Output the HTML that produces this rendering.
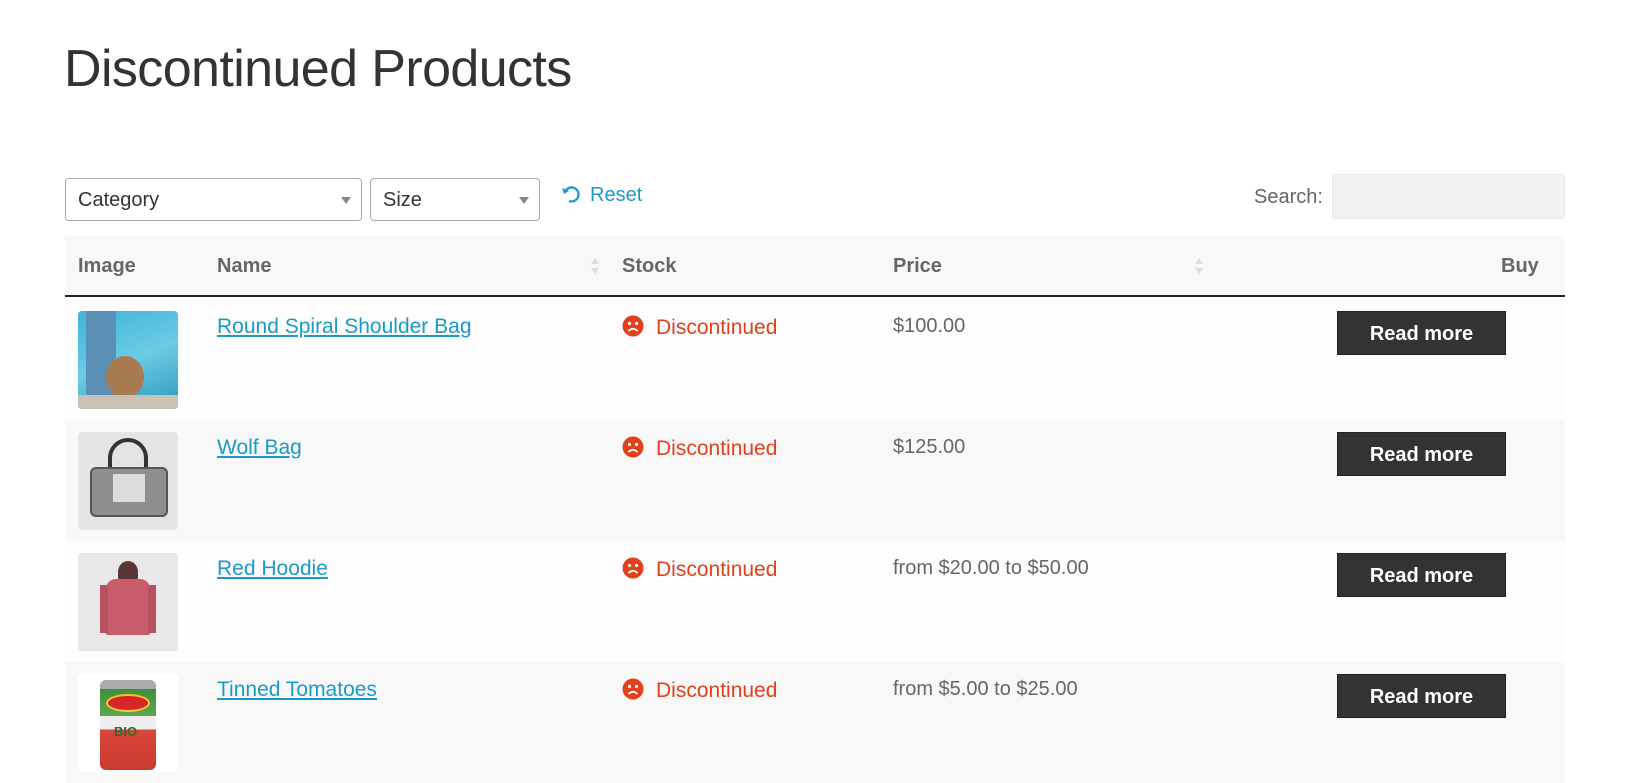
<!DOCTYPE html>
<html><head><meta charset="utf-8"><style>
*{margin:0;padding:0;box-sizing:border-box}
body{width:1640px;height:782px;overflow:hidden;background:#fff;font-family:"Liberation Sans",sans-serif;position:relative;color:#666}
.a{position:absolute}
h1{position:absolute;left:64px;top:39px;font-size:52px;font-weight:300;color:#333;letter-spacing:-0.6px;white-space:nowrap}
.sel{position:absolute;top:178px;height:43px;border:1px solid #aaa;border-radius:4px;background:#fff;font-size:20px;color:#333;padding:10px 12px;line-height:22px}
.sel:after{content:"";position:absolute;right:10px;top:18px;border-left:5px solid transparent;border-right:5px solid transparent;border-top:7px solid #888}
.row{position:absolute;left:65px;width:1500px;height:121px}
.img{position:absolute;left:13px;top:12px;width:100px;height:98px;border-radius:4px;overflow:hidden}
.name{position:absolute;left:152px;top:16px;font-size:21px;color:#1a9ac8;text-decoration:underline}
.stock{position:absolute;left:557px;top:16px;font-size:21px;color:#e2401c}
.stock svg{vertical-align:-3px;margin-right:12px}
.price{position:absolute;left:828px;top:16px;font-size:20px;color:#666}
.btn{position:absolute;left:1272px;top:12px;width:169px;height:44px;background:#333;color:#fff;font-weight:bold;font-size:20px;text-align:center;line-height:44px;border:1px solid #222}
.th{position:absolute;top:255px;font-size:20px;font-weight:bold;color:#666}
.sort{position:absolute;top:256px;width:10px;height:20px}
</style></head><body>
<h1>Discontinued Products</h1>
<div class="sel" style="left:65px;width:297px">Category</div>
<div class="sel" style="left:370px;width:170px">Size</div>
<svg class="a" style="left:560px;top:184px" width="22" height="22" viewBox="0 0 22 22"><path d="M5 8 A7 7 0 1 1 9 17" fill="none" stroke="#1a9ac8" stroke-width="2.3"/><path d="M2 4 L4 10 L9 7 Z" fill="#1a9ac8"/></svg>
<div class="a" style="left:590px;top:184px;font-size:20px;color:#1a9ac8">Reset</div>
<div class="a" style="left:1254px;top:186px;font-size:20px;color:#666">Search:</div>
<div class="a" style="left:1332px;top:174px;width:233px;height:45px;background:#f2f2f2;border:1px solid #e6e6e6;border-radius:3px"></div>
<div class="a" style="left:65px;top:236px;width:1500px;height:61px;background:#f8f8f8;border-bottom:2px solid #222"></div>
<div class="th" style="left:78px">Image</div>
<div class="th" style="left:217px">Name</div>
<div class="th" style="left:622px">Stock</div>
<div class="th" style="left:893px">Price</div>
<div class="th" style="left:1501px">Buy</div>
<svg class="sort" style="left:590px" viewBox="0 0 10 20"><path d="M1 8 L5 2 L9 8Z M1 12 L5 18 L9 12Z" fill="#ddd"/></svg>
<svg class="sort" style="left:1194px" viewBox="0 0 10 20"><path d="M1 8 L5 2 L9 8Z M1 12 L5 18 L9 12Z" fill="#ddd"/></svg>

<svg width="0" height="0" style="position:absolute"><defs><g id="f"><circle cx="11" cy="11" r="10.5" fill="#e2401c"/><circle cx="7.5" cy="8.5" r="1.6" fill="#fff"/><circle cx="14.5" cy="8.5" r="1.6" fill="#fff"/><path d="M6.5 16 Q11 11.5 15.5 16" fill="none" stroke="#fff" stroke-width="1.8"/></g></defs></svg>

<div class="row" style="top:299px;background:#fdfdfd">
 <div class="img" style="background:linear-gradient(160deg,#3fb4d8,#6ccbe6 50%,#2c98b8)"><div class="a" style="left:8px;top:0;width:30px;height:98px;background:#5c8fb5"></div><div class="a" style="left:28px;top:45px;width:38px;height:42px;border-radius:50%;background:#a77b4f"></div><div class="a" style="left:0;top:84px;width:100px;height:14px;background:#c9c2b6"></div></div>
 <a class="name">Round Spiral Shoulder Bag</a>
 <div class="stock"><svg width="22" height="22"><use href="#f"/></svg>Discontinued</div>
 <div class="price">$100.00</div>
 <div class="btn">Read more</div>
</div>
<div class="row" style="top:420px;background:#f8f8f8">
 <div class="img" style="background:#e4e4e6"><div class="a" style="left:30px;top:6px;width:40px;height:40px;border:4px solid #333;border-radius:20px 20px 0 0"></div><div class="a" style="left:12px;top:35px;width:78px;height:50px;background:#8f8f8f;border:2px solid #555;border-radius:6px"></div><div class="a" style="left:35px;top:42px;width:32px;height:28px;background:#ddd"></div></div>
 <a class="name">Wolf Bag</a>
 <div class="stock"><svg width="22" height="22"><use href="#f"/></svg>Discontinued</div>
 <div class="price">$125.00</div>
 <div class="btn">Read more</div>
</div>
<div class="row" style="top:541px;background:#fdfdfd">
 <div class="img" style="background:#e8e8ea"><div class="a" style="left:40px;top:8px;width:20px;height:22px;border-radius:50% 50% 30% 30%;background:#5a3535"></div><div class="a" style="left:28px;top:26px;width:44px;height:56px;border-radius:10px 10px 2px 2px;background:#c75d6a"></div><div class="a" style="left:22px;top:32px;width:8px;height:48px;background:#b85260"></div><div class="a" style="left:70px;top:32px;width:8px;height:48px;background:#b85260"></div></div>
 <a class="name">Red Hoodie</a>
 <div class="stock"><svg width="22" height="22"><use href="#f"/></svg>Discontinued</div>
 <div class="price">from $20.00 to $50.00</div>
 <div class="btn">Read more</div>
</div>
<div class="row" style="top:662px;background:#f8f8f8">
 <div class="img" style="background:#fff"><div class="a" style="left:22px;top:6px;width:56px;height:90px;border-radius:6px;background:linear-gradient(180deg,#aaa 0,#aaa 10%,#3f8f3c 10%,#5ca650 40%,#eee 40%,#eee 55%,#d9463a 55%,#c93a2c)"></div><div class="a" style="left:28px;top:20px;width:44px;height:18px;border-radius:50%;background:#d5272b;border:2px solid #f3c52a"></div><div class="a" style="left:36px;top:50px;font-size:13px;font-weight:bold;color:#2d6a2d">BIO</div></div>
 <a class="name">Tinned Tomatoes</a>
 <div class="stock"><svg width="22" height="22"><use href="#f"/></svg>Discontinued</div>
 <div class="price">from $5.00 to $25.00</div>
 <div class="btn">Read more</div>
</div>
</body></html>
